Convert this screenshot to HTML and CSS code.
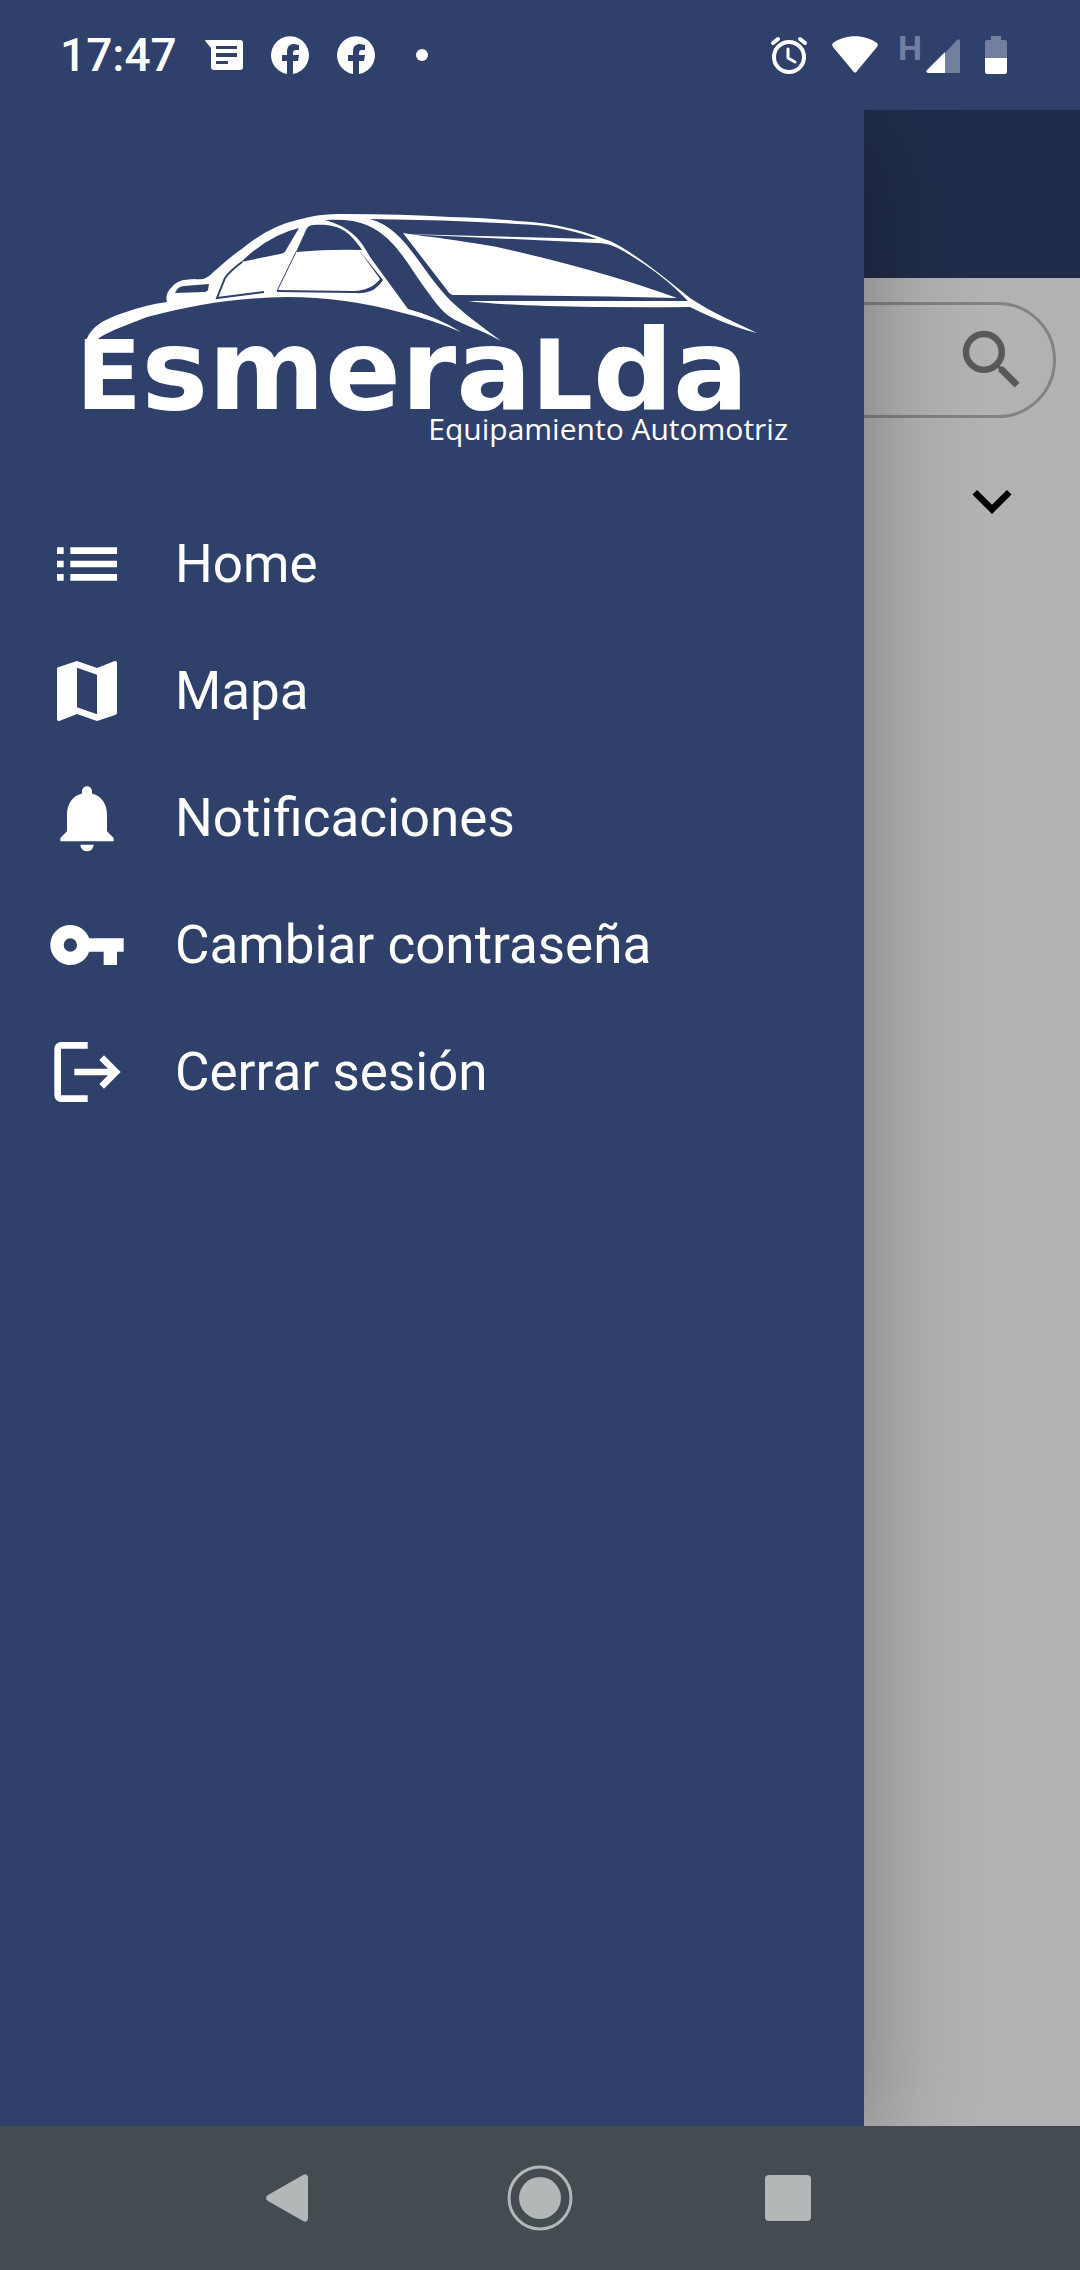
FILE: index.html
```html
<!DOCTYPE html>
<html lang="es">
<head>
<meta charset="utf-8">
<meta name="viewport" content="width=device-width, initial-scale=1">
<title>Esmeralda</title>
<link rel="stylesheet" href="styles.css">
</head>
<body>
<header class="status">
  <time class="clock">17:47</time>
  <div class="notices">
    <svg width="38" height="38" viewBox="0 0 38 38" aria-hidden="true"><path fill="#fff" fill-rule="evenodd" d="M0 4h35a3 3 0 0 1 3 3v24a3 3 0 0 1-3 3H9a3 3 0 0 1-3-3V12L1 6zM11 10v3h21v-3zm0 7v4h21v-4zm0 8v3h12v-3z"/></svg>
    <svg width="38" height="38" viewBox="0 0 38 38" aria-hidden="true"><path fill="#fff" d="M16 38V25h-5v-6h5v-3c0-6 3-8 7-8l5 1v5h-3c-2 0-3 1-3 3v2h6l-1 6h-5v13A19 19 0 1 0 16 38z"/></svg>
    <svg width="38" height="38" viewBox="0 0 38 38" aria-hidden="true"><path fill="#fff" d="M16 38V25h-5v-6h5v-3c0-6 3-8 7-8l5 1v5h-3c-2 0-3 1-3 3v2h6l-1 6h-5v13A19 19 0 1 0 16 38z"/></svg>
    <svg width="38" height="38" viewBox="0 0 38 38" aria-hidden="true"><circle cx="19" cy="19" r="6" fill="#fff"/></svg>
  </div>
  <div class="signals">
    <svg width="38" height="40" viewBox="0 0 38 40" aria-hidden="true"><g fill="none" stroke="#fff"><circle cx="19" cy="22" r="15" stroke-width="4"/><path stroke-width="3" stroke-linecap="round" stroke-linejoin="round" d="M18 14v9l7 4"/><path stroke-width="4" stroke-linecap="round" d="M3 8l5-4M35 8l-5-4"/></g></svg>
    <svg width="46" height="40" viewBox="0 0 46 40" aria-hidden="true"><path fill="#fff" d="M1 8C13-1 33-1 45 8c1 1 1 2 0 4L25 36c-1 2-3 2-4 0L1 12C0 10 0 9 1 8z"/></svg>
    <div class="mobile">
      <span class="network">H</span>
      <svg width="34" height="40" viewBox="0 0 34 40" aria-hidden="true"><path fill="#737f9e" d="M19 18L31 5q3-2 3 1v31q0 1-1 1H19z"/><path fill="#fff" d="M19 17v21H2q-3-1-1-3z"/></svg>
    </div>
    <svg width="24" height="40" viewBox="0 0 24 40" aria-hidden="true"><path fill="#737f9e" d="M7 1h10v4h4q2 0 2 2v17H1V7q0-2 2-2h4z"/><path fill="#fff" d="M1 23h22v14q0 2-2 2H3q-2 0-2-2z"/></svg>
  </div>
</header>

<main class="app">
  <section class="page">
    <div class="appbar"></div>
    <form class="search">
      <input class="search-input" type="search" aria-label="Buscar">
      <svg class="icon-page" viewBox="0 0 24 24" aria-hidden="true"><path fill="#808080" d="M15.500 14h-.79l-.28-.27A6.470 6.470 0 0 0 16 9.500 6.500 6.500 0 1 0 9.500 16c1.610 0 3.090-.59 4.230-1.570l.27.28v.79l5 4.990L20.490 19zm-6 0a4.500 4.500 0 1 1 0-9 4.500 4.500 0 0 1 0 9z"/></svg>
    </form>
    <button class="expand" type="button" aria-label="Desplegar">
      <svg class="icon-page" viewBox="0 0 24 24" aria-hidden="true"><path d="M16.590 8.590L12 13.170 7.410 8.590 6 10l6 6 6-6z"/></svg>
    </button>
  </section>
  <div class="scrim"></div>
  <aside class="drawer">
    <svg class="logo" viewBox="70 200 730 260" role="img" aria-label="Esmeralda Equipamiento Automotriz">
      <g fill="#fff">
        <path d="M85 349C85 327 108 318 123 313Q145 305 167 302C165 297 168 290 172 287C180 277 192 280 203 279C208 278 212 273 217 269Q230 257 243 248Q270 226 297 220Q320 213 343 214Q403 214 450 217Q490 218 517 221C557 223 583 231 610 241Q630 250 670 282L690 298C712 313 735 322 757 333Q728 326 690 307Q620 308 547 306Q490 304 468 301L688 301L677 290Q658 272 630 255C619 248 610 243 597 243L403 234L597 239Q560 225 517 224Q450 220 370 219C405 229 416 263 447 297C459 310 480 325 501 341Q483 331 473 328C450 318 445 316 430 295C407 266 394 229 353 221Q340 219 325 220C353 228 362 242 370 257L408 309Q435 316 461 332Q430 319 403 313Q345 297 287 297C230 298 195 305 147 317C120 328 95 335 90 349Z"/>
        <path d="M403 233L423 236Q450 239 497 247Q600 270 677 298Q550 295 453 295Q449 294 447 290Z"/>
      </g>
      <g fill="#2f406b">
        <path d="M241 262Q269 235 299 228L286 250Q285 253 280 254Z"/>
        <path d="M296 252L306 230Q308 225 314 225C340 223 350 233 360 247L362 250Q330 249 296 252Z"/>
        <path d="M175 293Q178 286 184 286L209 284L208 290Q208 291 205 292Z"/>
        <path d="M359 250L383 280C376 290 370 294 353 293L277 292V290L354 291C370 290 376 284 380 279Z"/>
      </g>
      <path fill="none" stroke="#2f406b" stroke-width="2" d="M242 262Q230 271 225 278L217 298L264 292"/>
      <path fill="none" stroke="#2f406b" d="M296 252L277 291"/>
      <text class="wordmark" x="76" y="409"><tspan class="wordmark-cap">E</tspan>smera<tspan class="wordmark-cap">L</tspan>da</text>
      <text class="tagline" x="788" y="440">Equipamiento Automotriz</text>
    </svg>
    <nav>
      <ul class="menu">
        <li><a class="item" href="#home"><svg class="icon" viewBox="0 0 24 24" aria-hidden="true"><path d="M3 7h2v2H3zm4 0h14v2H7zm-4 4h2v2H3zm4 0h14v2H7zm-4 4h2v2H3zm4 0h14v2H7z"/></svg>Home</a></li>
        <li><a class="item" href="#mapa"><svg class="icon" viewBox="0 0 24 24" aria-hidden="true"><path d="M20.500 3l-.16.03L15 5.100 9 3 3.360 4.900c-.21.07-.36.25-.36.48V20.500c0 .28.22.5.5.5l.16-.03L9 18.900l6 2.100 5.640-1.900c.21-.07.36-.25.36-.48V3.500c0-.28-.22-.5-.5-.5zM15 19l-6-2.110V5l6 2.110z"/></svg>Mapa</a></li>
        <li><a class="item" href="#notificaciones"><svg class="icon" viewBox="0 0 24 24" aria-hidden="true"><path d="M12 22a2 2 0 0 0 2-2h-4a2 2 0 0 0 2 2zm6-6v-5c0-3.070-1.640-5.640-4.500-6.320V4a1.500 1.500 0 0 0-3 0v.68C7.630 5.360 6 7.920 6 11v5l-2 2v1h16v-1z"/></svg>Notificaciones</a></li>
        <li><a class="item" href="#contrasena"><svg class="icon" viewBox="0 0 24 24" aria-hidden="true"><path d="M12.650 10A6 6 0 0 0 7 6a6 6 0 1 0 5.650 8H17v4h4v-4h2v-4zM7 14a2 2 0 1 1 0-4 2 2 0 0 1 0 4z"/></svg>Cambiar contraseña</a></li>
        <li><a class="item" href="#salir"><svg class="icon" viewBox="0 0 24 24" aria-hidden="true"><path d="M15.700 15.600L18.300 13H8.200v-2h10.100l-2.600-2.600L17.100 7l5 5-5 5zM4.200 3h8v2h-8v14h8v2h-8a2 2 0 0 1-2-2V5a2 2 0 0 1 2-2z"/></svg>Cerrar sesión</a></li>
      </ul>
    </nav>
  </aside>
</main>

<footer class="system">
  <button class="key" type="button" aria-label="Atrás"><svg width="72" height="72" viewBox="0 0 72 72"><path d="M14 33L49 13q4-2 5 2v42q-1 4-5 2L14 39q-4-3 0-6z"/></svg></button>
  <button class="key" type="button" aria-label="Inicio"><svg width="72" height="72" viewBox="0 0 72 72"><circle cx="36" cy="36" r="21"/><circle cx="36" cy="36" r="31" fill="none" stroke="#b3b7b8" stroke-width="3"/></svg></button>
  <button class="key" type="button" aria-label="Recientes"><svg width="72" height="72" viewBox="0 0 72 72"><rect x="11" y="13" width="46" height="46" rx="4"/></svg></button>
</footer>
</body>
</html>
```
FILE: styles.css
```css
* {
  box-sizing: border-box;
}

body {
  margin: 0;
  min-height: 100vh;
  display: flex;
  flex-direction: column;
  background: #2f406b;
  color: #fff;
  font-family: Roboto, "Liberation Sans", sans-serif;
}

svg {
  display: block;
}

button {
  padding: 0;
  border: 0;
  background: none;
}

/* Status bar */
.status {
  height: 110px;
  padding: 0 72px 0 60px;
  display: flex;
  align-items: center;
}

.clock {
  font-size: 46px;
  font-weight: 500;
  line-height: 56px;
}

.notices {
  margin-left: 28px;
  display: flex;
  gap: 28px;
}

.signals {
  margin-left: auto;
  display: flex;
  gap: 24px;
}

.mobile {
  margin-left: -4px;
  display: flex;
  gap: 4px;
}

.network {
  color: #737f9e;
  font-size: 34px;
  font-weight: 700;
  line-height: 26px;
}

/* Page below the drawer */
.app {
  flex: 1;
  display: grid;
  grid-template-columns: 100%;
  overflow: hidden;
}

.page,
.scrim,
.drawer {
  grid-area: 1 / 1;
}

.page {
  display: flex;
  flex-direction: column;
  background: #fff;
}

.appbar {
  height: 168px;
  background: #2f406b;
}

.search {
  height: 116px;
  margin: 24px 24px 44px;
  padding: 0 22px 0 40px;
  display: flex;
  align-items: center;
  border: 3px solid #bbb;
  border-radius: 58px;
}

.search-input {
  flex: 1;
  min-width: 0;
  height: 78px;
  border: 0;
  outline: 0;
  background: none;
  font: inherit;
  font-size: 46px;
}

.icon-page {
  width: 78px;
  height: 78px;
}

.expand {
  align-self: flex-end;
  margin-right: 49px;
}

.scrim {
  background: rgba(0, 0, 0, 0.3);
}

/* Drawer */
.drawer {
  width: 80%;
  padding-top: 90px;
  background: #2f406b;
  box-shadow: 0 24px 100px rgba(0, 0, 0, 0.32);
}

.logo {
  width: 100%;
  padding: 0 64px 0 70px;
  margin-bottom: 40px;
}

.wordmark {
  fill: #fff;
  font-family: "DejaVu Sans", sans-serif;
  font-size: 112px;
  font-weight: 700;
}

.wordmark-cap {
  font-size: 96px;
}

.tagline {
  fill: #fff;
  font-family: "Open Sans", sans-serif;
  font-size: 30px;
  text-anchor: end;
}

.menu {
  margin: 0;
  padding: 0;
  list-style: none;
}

.item {
  min-height: 127px;
  padding-left: 47px;
  display: flex;
  align-items: center;
  gap: 48px;
  color: #fff;
  font-size: 53px;
  line-height: 64px;
  text-decoration: none;
}

.icon {
  width: 80px;
  height: 80px;
  fill: #fff;
}

/* System keys */
.system {
  height: 144px;
  display: flex;
  align-items: center;
  justify-content: center;
  gap: 178px;
  background: #444c52;
}

.key {
  fill: #b3b7b8;
}
```
